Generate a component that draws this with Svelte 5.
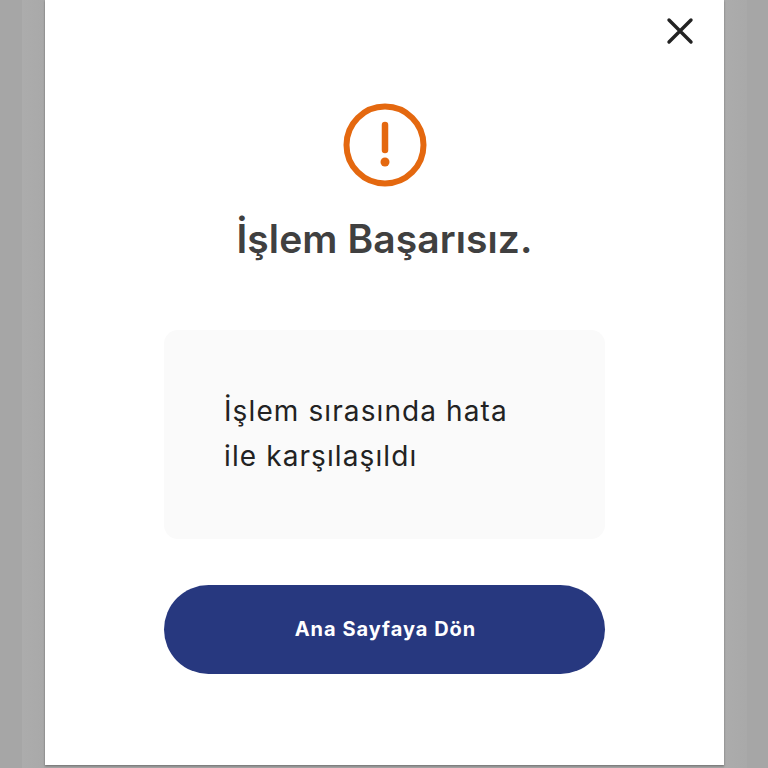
<script>
  const title = 'İşlem Başarısız.';
</script>

<div class="backdrop">
  <div class="modal">
    <button class="close" aria-label="Kapat">
      <svg width="28" height="28" viewBox="0 0 28 28" fill="none" stroke="#222" stroke-width="3.4" stroke-linecap="round">
        <path d="M3 3 L25 25 M25 3 L3 25" />
      </svg>
    </button>
    <svg class="alert" width="84" height="84" viewBox="0 0 84 84" fill="none">
      <circle cx="42" cy="42" r="38.5" stroke="#e4680f" stroke-width="6" />
      <path d="M42 22 V47" stroke="#e4680f" stroke-width="6.5" stroke-linecap="round" />
      <circle cx="42" cy="59" r="4.5" fill="#e4680f" />
    </svg>
    <h1>{title}</h1>
    <div class="message">
      <p>İşlem sırasında hata<br />ile karşılaşıldı</p>
    </div>
    <button class="home">Ana Sayfaya Dön</button>
  </div>
</div>

<style>
  :global(body) {
    margin: 0;
    background: #a6a6a6;
  }

  .backdrop {
    height: 768px;
    overflow: hidden;
    display: flex;
    justify-content: center;
    align-items: flex-start;
    background: linear-gradient(to right, #a6a6a6 22px, #acacac 22px, #a9a9a9 44px, #a6a6a6 44px, #a6a6a6 724px, #acacac 724px, #a9a9a9 747px, #a6a6a6 747px);
    font-family: Inter, sans-serif;
  }

  .modal {
    position: relative;
    box-sizing: border-box;
    width: 679px;
    height: 765px;
    margin-left: 1px;
    background: #fff;
    display: flex;
    flex-direction: column;
    align-items: center;
    padding-top: 103px;
    box-shadow: 0 1px 2px rgba(0, 0, 0, 0.35);
  }

  .close {
    position: absolute;
    top: 17px;
    right: 30px;
    padding: 0;
    border: 0;
    background: none;
    line-height: 0;
  }

  h1 {
    margin: 26px 0 0;
    font-size: 39px;
    line-height: 52px;
    font-weight: 600;
    letter-spacing: 0.1px;
    color: #404040;
  }

  .message {
    box-sizing: border-box;
    width: 441px;
    height: 209px;
    margin-top: 65px;
    padding: 59px 60px 0;
    background: #fafafa;
    border-radius: 14px;
  }

  p {
    margin: 0;
    font-size: 28px;
    line-height: 45px;
    letter-spacing: 1.1px;
    color: #222;
  }

  .home {
    width: 441px;
    height: 89px;
    margin-top: 46px;
    padding: 0 0 2px 2px;
    border: 0;
    border-radius: 45px;
    background: #27387f;
    color: #fff;
    font-family: Inter, sans-serif;
    font-size: 20px;
    font-weight: 700;
    letter-spacing: 1px;
  }
</style>
